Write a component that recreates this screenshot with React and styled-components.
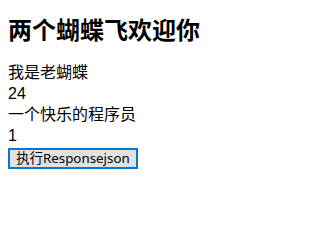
import React from "react";
import styled, { createGlobalStyle } from "styled-components";

const GlobalStyle = createGlobalStyle`
  body {
    margin: 0;
    background: #ffffff;
    color: #000000;
    font-family: "Noto Sans CJK SC", "Noto Sans", sans-serif;
  }
`;

const Page = styled.div`
  display: flex;
  flex-direction: column;
  align-items: flex-start;
  padding: 13px 8px 0 8px;
`;

const Title = styled.h1`
  margin: 0 0 17px 0;
  font-size: 24px;
  font-weight: 700;
  line-height: 32px;
  white-space: nowrap;
`;

const Line = styled.div`
  font-family: "Liberation Sans", "Noto Sans CJK SC", sans-serif;
  font-size: 16px;
  line-height: 21px;
  white-space: nowrap;
`;

const ActionButton = styled.button`
  margin-top: 2px;
  width: 130px;
  height: 21px;
  padding: 0;
  box-sizing: border-box;
  border: 2px solid #0078d7;
  background: #e1e1e1;
  color: #000000;
  font-family: "Noto Sans", "Noto Sans CJK SC", sans-serif;
  font-size: 13.33px;
  line-height: 17px;
  white-space: nowrap;
  cursor: pointer;
`;

function App() {
  const rows = ["我是老蝴蝶", "24", "一个快乐的程序员", "1"];

  return (
    <>
      <GlobalStyle />
      <Page>
        <Title>两个蝴蝶飞欢迎你</Title>
        {rows.map((text, i) => (
          <Line key={i}>{text}</Line>
        ))}
        <ActionButton type="button">执行Responsejson</ActionButton>
      </Page>
    </>
  );
}

export default App;
